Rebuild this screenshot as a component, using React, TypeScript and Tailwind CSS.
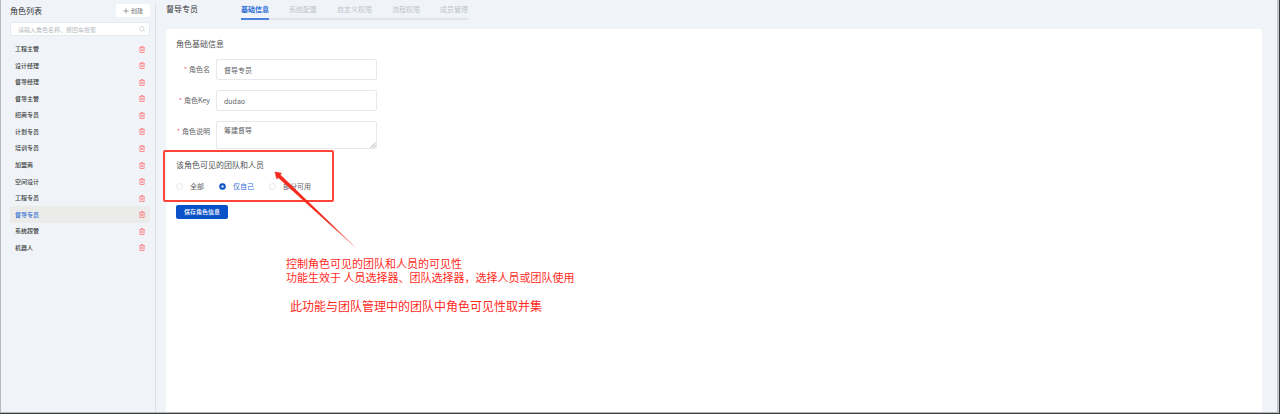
import React, { useState } from "react";

const ROLES = [
  "工程主管",
  "设计经理",
  "督导经理",
  "督导主管",
  "招商专员",
  "计划专员",
  "培训专员",
  "加盟商",
  "空间设计",
  "工程专员",
  "督导专员",
  "系统超管",
  "机器人",
];

const TABS = ["基础信息", "系统配置", "自定义权限", "流程权限", "成员管理"];

const SCOPES = ["全部", "仅自己", "部分可用"];

function TrashIcon() {
  return (
    <svg viewBox="0 0 12 14" className="h-[7px] w-[6px]" fill="none" stroke="#ff7b80" strokeWidth="1.6">
      <path d="M0.2 3.4h11.6M4 3.4V1h4v2.4M1.8 3.4V13h8.4V3.4M4.7 6v4.4M7.3 6v4.4" />
    </svg>
  );
}

function SearchIcon() {
  return (
    <svg viewBox="0 0 12 12" className="size-[6px] shrink-0" fill="none" stroke="#c0c4cc" strokeWidth="1.3">
      <circle cx="5.5" cy="5.5" r="4.6" />
      <path d="M9 9l2.4 2.4" />
    </svg>
  );
}

function Sidebar({ active, onSelect }: { active: string; onSelect: (role: string) => void }) {
  return (
    <aside className="mt-1 flex w-[155px] shrink-0 flex-col border-r border-[#dde1e6] pr-[5px] pl-[9px]">
      <div className="flex h-[13px] items-center justify-between">
        <h1 className="text-[8px] leading-none text-[#303133]">角色列表</h1>
        <button
          type="button"
          className="flex h-[13px] w-[34px] items-center justify-center gap-[2px] rounded-xs bg-white text-[6px] leading-none text-[#606266]"
        >
          <svg viewBox="0 0 10 10" className="size-[6px]" stroke="#808286" strokeWidth="1.2">
            <path d="M5 0.5v9M0.5 5h9" />
          </svg>
          创建
        </button>
      </div>

      <label className="mt-[5px] flex h-[14px] items-center rounded-xs border border-[#e6eaef] bg-white pr-[4px] pl-[7px]">
        <input
          type="text"
          aria-label="搜索角色"
          placeholder="请输入角色名称、按回车搜索"
          className="min-w-0 flex-1 bg-transparent text-[6px] leading-none outline-none placeholder:text-[#b4b8c0]"
        />
        <SearchIcon />
      </label>

      <ul className="mt-[5px] grid h-[215px] auto-rows-fr">
        {ROLES.map((role) => (
          <li
            key={role}
            className={`flex items-center justify-between rounded-xs px-[5px] ${
              role === active ? "bg-[#ebebea]" : ""
            }`}
          >
            <button
              type="button"
              onClick={() => onSelect(role)}
              className={`text-[6px] leading-none font-medium ${
                role === active ? "text-[#2f6fd6]" : "text-[#3c3d40]"
              }`}
            >
              {role}
            </button>
            <button type="button" aria-label={`删除${role}`}>
              <TrashIcon />
            </button>
          </li>
        ))}
      </ul>
    </aside>
  );
}

function Field({ id, label, children }: { id: string; label: string; children: React.ReactNode }) {
  return (
    <div className="flex">
      <label htmlFor={id} className="flex h-[21px] w-10 items-center justify-end gap-[2px] pr-[6px] whitespace-nowrap">
        <span className="text-[#f56c6c]">*</span>
        {label}
      </label>
      {children}
    </div>
  );
}

// Red callout drawn over the form
function Callout() {
  return (
    <div className="pointer-events-none absolute top-[121px] left-[-3px] text-[#ff2a1c]">
      <div className="h-[52px] w-[171px] rounded-xs border-2 border-[#ff4438]" />
      <svg viewBox="0 0 82 78" className="absolute top-[21px] left-[111px] h-[78px] w-[82px]">
        <defs>
          <linearGradient id="tail" x1="0" y1="0" x2="1" y2="1">
            <stop offset="0.7" stopColor="#f4281c" />
            <stop offset="1" stopColor="#f4281c" stopOpacity="0.2" />
          </linearGradient>
        </defs>
        <path d="M1 1L7.5 2.2L6.2 3.8L81 76L4.2 6.6L2.8 8Z" fill="url(#tail)" stroke="url(#tail)" strokeWidth="0.6" />
      </svg>
      <div className="absolute top-[106px] left-[123px] whitespace-nowrap">
        <p className="text-[11px] leading-[14px]">控制角色可见的团队和人员的可见性</p>
        <p className="text-[11px] leading-[14px]">功能生效于 人员选择器、团队选择器，选择人员或团队使用</p>
        <p className="mt-[13px] pl-1 text-[12px] leading-[18px]">此功能与团队管理中的团队中角色可见性取并集</p>
      </div>
    </div>
  );
}

const inputClass =
  "w-[161px] rounded-xs border border-[#e6e8ed] bg-white px-[7px] text-[7px] text-[#606266] outline-none";

export default function App() {
  const [role, setRole] = useState("督导专员");
  const [tab, setTab] = useState("基础信息");
  const [scope, setScope] = useState("仅自己");

  return (
    <div className="flex min-h-screen border-r border-b border-[#3c3d42] bg-[#f0f4f8] font-['Noto_Sans_CJK_SC',sans-serif] text-[7px] leading-none text-[#606266]">
      <div className="flex min-w-0 flex-1 border-r-2 border-b border-l border-[#b5b8bd] border-r-[#c3c6cc]">
        <Sidebar active={role} onSelect={setRole} />

        <main className="flex min-w-0 flex-1 flex-col pr-[15px] pl-[10px]">
          <header className="flex h-[29px] items-start">
            <h2 className="w-[75px] pt-[5px] text-[8px] leading-none text-[#303133]">督导专员</h2>
            <nav className="flex h-5 gap-5 border-b-2 border-[#e2e6eb]">
              {TABS.map((name) => (
                <button
                  key={name}
                  type="button"
                  onClick={() => setTab(name)}
                  className={`-mb-[2px] border-b-2 text-[7px] leading-none ${
                    name === tab
                      ? "border-[#4a82dd] font-bold text-[#2f6fd6]"
                      : "border-transparent text-[#c0c4cc]"
                  }`}
                >
                  {name}
                </button>
              ))}
            </nav>
          </header>

          <section className="relative flex-1 rounded-t-xs bg-white px-[10px]">
            <form onSubmit={(e) => e.preventDefault()}>
              <h3 className="pt-[11px] text-[8px] leading-none text-[#505256]">角色基础信息</h3>

              <div className="mt-[11px] flex flex-col gap-[10px]">
                <Field id="name" label="角色名">
                  <input id="name" defaultValue="督导专员" className={`${inputClass} h-[21px]`} />
                </Field>
                <Field id="key" label="角色Key">
                  <input id="key" defaultValue="dudao" className={`${inputClass} h-[21px]`} />
                </Field>
                <Field id="desc" label="角色说明">
                  <div className="relative flex">
                    <textarea
                      id="desc"
                      defaultValue="筹建督导"
                      className={`${inputClass} h-[28px] resize-none overflow-hidden py-1 leading-[8px]`}
                    />
                    <svg viewBox="0 0 6 6" className="absolute right-px bottom-px size-[6px]" stroke="#8c8f94" strokeWidth="0.7">
                      <path d="M0.5 5.8L5.8 0.5M3 5.8L5.8 3" />
                    </svg>
                  </div>
                </Field>
              </div>

              <fieldset>
                <legend className="pt-3 text-[8px] leading-none text-[#505256]">该角色可见的团队和人员</legend>
                <div className="mt-[14px] flex h-[7px] items-center gap-[15px]">
                  {SCOPES.map((name) => (
                    <label key={name} className={`flex items-center gap-[7px] ${name === scope ? "text-[#2f6fd6]" : ""}`}>
                      <input
                        type="radio"
                        name="scope"
                        checked={name === scope}
                        onChange={() => setScope(name)}
                        className="size-[7px] appearance-none rounded-full border border-[#e6e8ed] bg-white checked:border-[#0a52c8] checked:bg-[radial-gradient(circle,#ffffff_0px,#0a52c8_2px)]"
                      />
                      {name}
                    </label>
                  ))}
                </div>
              </fieldset>

              <button
                type="submit"
                className="mt-[15px] flex h-[14px] w-[52px] items-center justify-center rounded-xs bg-[#0a52c8] text-[6px] leading-none font-medium text-white"
              >
                保存角色信息
              </button>
            </form>

            <Callout />
          </section>
        </main>
      </div>
    </div>
  );
}
